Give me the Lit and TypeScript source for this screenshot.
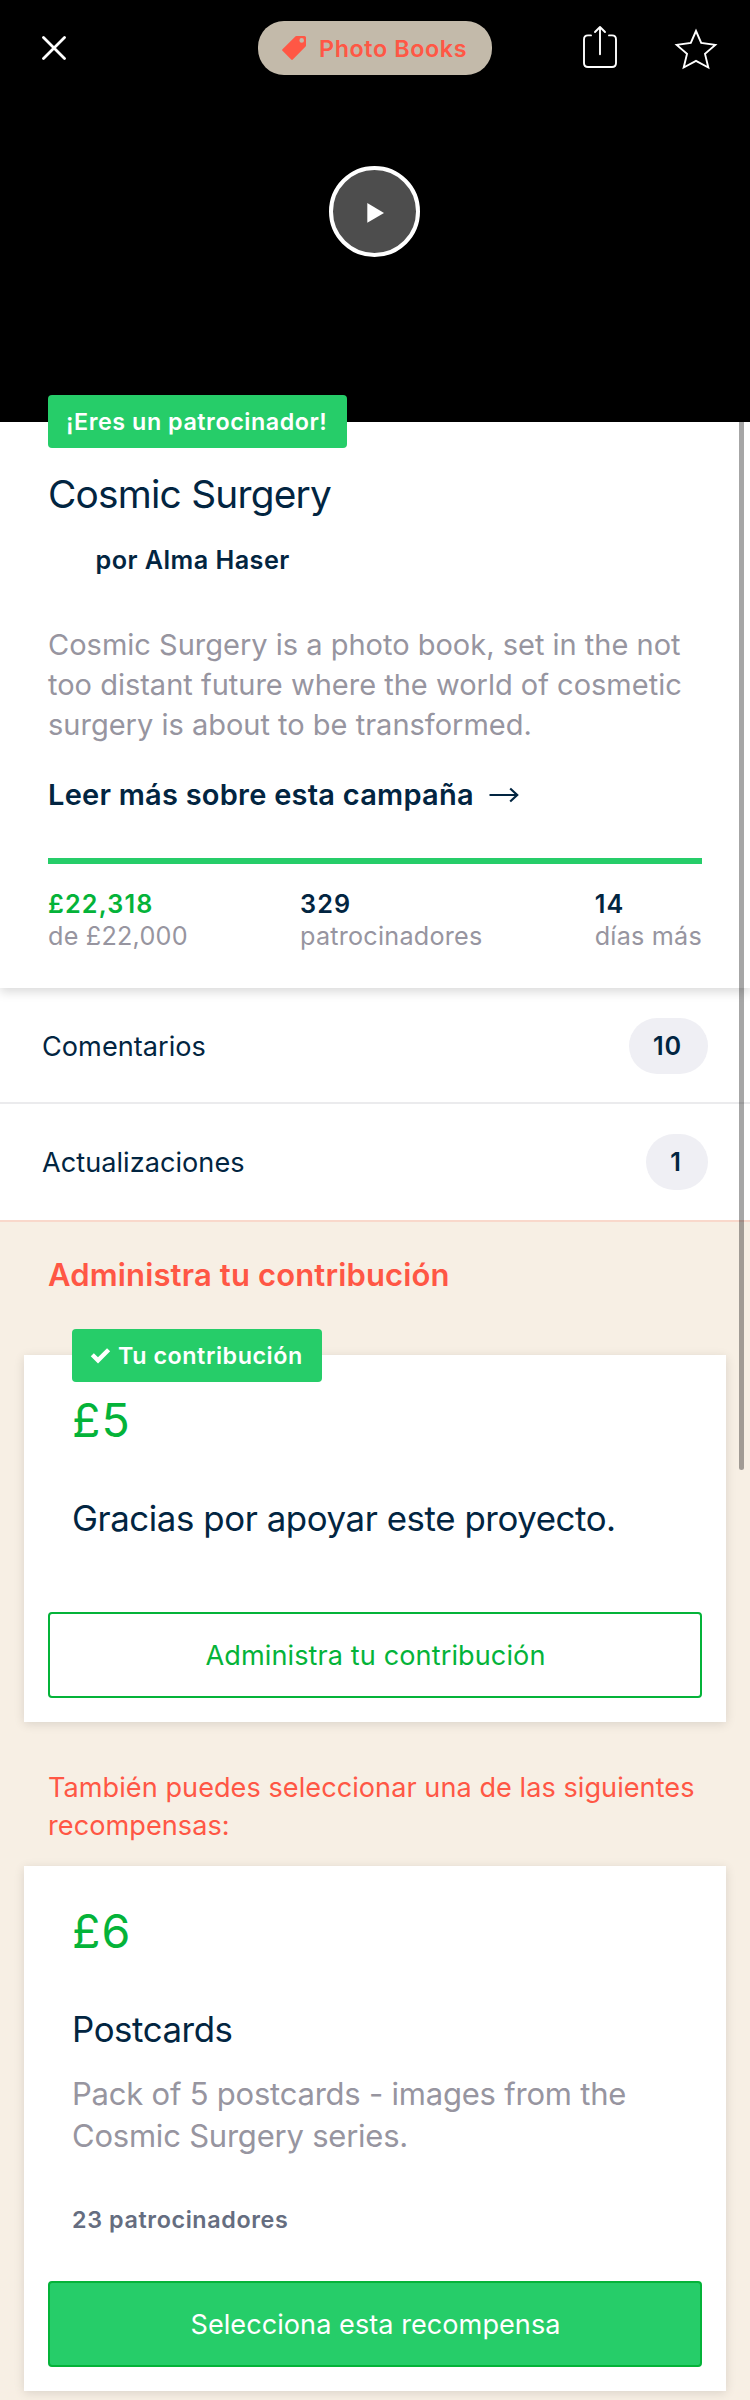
import { LitElement, html, css } from "lit";
import { customElement } from "lit/decorators.js";

@customElement("app-root")
export class AppRoot extends LitElement {
  static styles = css`
    :host {
      display: block;
      font-family: Inter, "Noto Sans", sans-serif;
      color: #022541;
      background: #f7efe4;
      min-height: 2400px;
      position: relative;
    }
    * { box-sizing: border-box; margin: 0; }
    svg { display: block; flex: none; }

    .hero { height: 422px; background: #000; }
    .topbar {
      display: grid;
      grid-template-columns: 216px 234px 1fr;
      padding: 21px 32px 0 42px;
      height: 75px;
      align-items: start;
    }
    .close { margin-top: 15px; }
    .category {
      display: flex;
      align-items: center;
      height: 54px;
      padding-left: 24px;
      gap: 13px;
      border-radius: 26px;
      background: #c3baaa;
      color: #ff5745;
      font-size: 23.3px;
      font-weight: 600;
      letter-spacing: 0.62px;
      white-space: nowrap;
    }
    .actions { display: flex; justify-content: flex-end; gap: 56px; padding-top: 4px; }
    .play {
      display: flex;
      width: 91px;
      height: 91px;
      margin: 91px 0 0 329px;
      border: 4px solid #fff;
      border-radius: 50%;
      background: #4d4d4d;
      padding: 33px 0 0 34px;
    }

    .summary {
      position: relative;
      height: 566px;
      padding: 0 48px;
      background: #fff;
      box-shadow: 0 4px 10px rgba(0, 0, 0, 0.15);
      z-index: 1;
    }
    .badge {
      display: flex;
      align-items: center;
      position: relative;
      height: 53px;
      border-radius: 4px;
      background: #26cd69;
      color: #fff;
      font-size: 23.3px;
      font-weight: 600;
      letter-spacing: 0.55px;
      white-space: nowrap;
      padding-left: 18px;
    }
    .badge-backer { width: 299px; top: -27px; margin-bottom: -27px; }
    .badge-pledge { width: 250px; top: -26px; margin: 0 0 -26px 24px; gap: 7px; }
    .title {
      font-size: 38.8px;
      font-weight: 400;
      letter-spacing: -0.77px;
      line-height: 48px;
      margin-top: 22px;
    }
    .author {
      font-size: 25.2px;
      font-weight: 600;
      letter-spacing: 0.46px;
      line-height: 32px;
      margin: 26px 0 0 47.5px;
    }
    .blurb {
      margin-top: 49px;
      font-size: 29px;
      line-height: 40px;
      letter-spacing: 0;
      color: #9795a0;
      white-space: nowrap;
    }
    .more {
      display: flex;
      align-items: center;
      gap: 15px;
      margin-top: 30px;
      font-size: 29px;
      font-weight: 600;
      line-height: 40px;
      letter-spacing: 0.24px;
      white-space: nowrap;
    }
    .progress { height: 6px; margin-top: 43px; background: #26cd69; }
    .stats {
      display: flex;
      justify-content: space-between;
      margin-top: 24px;
      font-size: 25.2px;
      line-height: 32px;
      white-space: nowrap;
    }
    .stat-value { font-weight: 600; letter-spacing: 1.15px; }
    .stat-value.green { color: #04b339; }
    .stat-label { color: #9795a0; letter-spacing: 0.22px; }

    .row {
      display: flex;
      justify-content: space-between;
      align-items: center;
      padding: 2px 42px 0;
      background: #fff;
      font-size: 27.1px;
      letter-spacing: 0.04px;
    }
    .row-comments { height: 116px; border-bottom: 2px solid #ebebed; }
    .row-updates { height: 118px; padding-top: 0; border-bottom: 2px solid #f9d8cb; }
    .count {
      display: flex;
      align-items: center;
      justify-content: center;
      height: 56px;
      padding: 0 25px 0 23px;
      border-radius: 28px;
      background: #efeff4;
      font-size: 25.2px;
      font-weight: 600;
      letter-spacing: 0.9px;
    }
    .count-10 { width: 79px; }
    .count-1 { width: 62px; }

    .manage { padding: 33px 24px 0; }
    .heading {
      font-size: 31px;
      font-weight: 600;
      letter-spacing: 0.15px;
      line-height: 40px;
      color: #ff5745;
      padding-left: 24px;
    }
    .card {
      background: #fff;
      box-shadow: 0 2px 10px rgba(0, 0, 0, 0.12);
      padding: 0 24px 24px;
    }
    .card-pledge { margin-top: 60px; }
    .card-reward { margin-top: 21px; padding-top: 37px; }
    .amount {
      padding-left: 24px;
      font-size: 46.5px;
      line-height: 56px;
      letter-spacing: 1.2px;
      color: #04b339;
    }
    .card-pledge .amount { margin-top: 10px; }
    .name {
      padding-left: 24px;
      margin-top: 48px;
      font-size: 34.8px;
      font-weight: 400;
      line-height: 44px;
      letter-spacing: -0.41px;
      white-space: nowrap;
    }
    .btn {
      display: flex;
      align-items: center;
      justify-content: center;
      height: 86px;
      padding-left: 1px;
      border: 2px solid #04b339;
      border-radius: 4px;
      font-size: 27.1px;
      letter-spacing: 0.1px;
    }
    .btn-outline { margin-top: 72px; color: #04b339; }
    .btn-solid { margin-top: 45px; background: #26cd69; color: #fff; letter-spacing: 0.04px; }
    .also {
      margin-top: 47px;
      padding-left: 24px;
      font-size: 27.1px;
      line-height: 38px;
      letter-spacing: 0.05px;
      color: #ff5745;
      white-space: nowrap;
    }
    .desc {
      padding-left: 24px;
      margin-top: 22px;
      font-size: 31px;
      line-height: 42px;
      letter-spacing: -0.22px;
      color: #9795a0;
      white-space: nowrap;
    }
    .backers {
      padding-left: 24px;
      margin-top: 47px;
      font-size: 23.3px;
      font-weight: 600;
      line-height: 32px;
      letter-spacing: 0.62px;
      color: #656d80;
    }
    .scrollbar {
      position: absolute;
      top: 422px;
      right: 6px;
      width: 5px;
      height: 1048px;
      border-radius: 0 0 3px 3px;
      background: rgba(0, 0, 0, 0.35);
      z-index: 2;
    }
  `;

  render() {
    return html`
      <header class="hero">
        <div class="topbar">
          <svg class="close" width="24" height="24" viewBox="0 0 24 24" fill="none" stroke="#fff" stroke-width="2.8" stroke-linecap="round">
            <path d="M1.5 1.5L22.5 22.5M22.5 1.5L1.5 22.5" />
          </svg>
          <div class="category">
            <svg width="24" height="24" viewBox="0 0 24 24" fill="#ff5745">
              <path fill-rule="evenodd" d="M13.6 0.3Q14 0 14.6 0H22.4Q24 0 24 1.6V9.4Q24 10 23.6 10.4L10.8 23.5Q10 24.3 9.2 23.5L0.5 14.8Q-0.3 14 0.5 13.2ZM19.7 2.1A2.3 2.3 0 1 0 19.7 6.7A2.3 2.3 0 1 0 19.7 2.1Z" />
            </svg>
            <span>Photo Books</span>
          </div>
          <div class="actions">
            <svg width="36" height="46" viewBox="582 25 36 46" fill="none" stroke="#fff" stroke-width="1.9" stroke-linecap="round" stroke-linejoin="round">
              <path d="M591 35.4H588Q584 35.4 584 39.4V63Q584 67 588 67H612Q616 67 616 63V39.4Q616 35.4 612 35.4H609" />
              <path d="M600 54.3V27M595 32L600 27L605 32" />
            </svg>
            <svg width="44" height="46" viewBox="674 25 44 46" fill="none" stroke="#fff" stroke-width="1.9">
              <path d="M696 31L701.2 43L715.3 44.9L705 53.9L708.3 67.5L696 60.8L683.7 67.5L687 53.9L676.7 44.9L690.8 43Z" />
            </svg>
          </div>
        </div>
        <div class="play">
          <svg width="18" height="20" viewBox="0 0 18 20" fill="#fff"><path d="M0.3 0L17 9.9L0.3 19.8Z" /></svg>
        </div>
      </header>

      <section class="summary">
        <div class="badge badge-backer">¡Eres un patrocinador!</div>
        <h1 class="title">Cosmic Surgery</h1>
        <p class="author">por Alma Haser</p>
        <p class="blurb">
          Cosmic Surgery is a photo book, set in the not<br />too distant future where the world of cosmetic<br />surgery is about to be transformed.
        </p>
        <div class="more">
          <span>Leer más sobre esta campaña</span>
          <svg width="30" height="16" viewBox="0 0 30 16" fill="none" stroke="#022541" stroke-width="2.2">
            <path d="M0.5 8H28M21.2 1.5L28.2 8L21.2 14.5" />
          </svg>
        </div>
        <div class="progress"></div>
        <div class="stats">
          <div>
            <div class="stat-value green">£22,318</div>
            <div class="stat-label">de £22,000</div>
          </div>
          <div>
            <div class="stat-value">329</div>
            <div class="stat-label">patrocinadores</div>
          </div>
          <div>
            <div class="stat-value">14</div>
            <div class="stat-label">días más</div>
          </div>
        </div>
      </section>

      <nav>
        <div class="row row-comments"><span>Comentarios</span><span class="count count-10">10</span></div>
        <div class="row row-updates"><span>Actualizaciones</span><span class="count count-1">1</span></div>
      </nav>

      <section class="manage">
        <h2 class="heading">Administra tu contribución</h2>
        <article class="card card-pledge">
          <div class="badge badge-pledge">
            <svg width="21" height="18" viewBox="0 0 21 18" fill="none" stroke="#fff" stroke-width="4.4">
              <path d="M2.3 7.8L8 13.4L18.6 2.8" />
            </svg>
            <span>Tu contribución</span>
          </div>
          <div class="amount">£5</div>
          <h3 class="name">Gracias por apoyar este proyecto.</h3>
          <div class="btn btn-outline">Administra tu contribución</div>
        </article>
        <p class="also">También puedes seleccionar una de las siguientes<br />recompensas:</p>
        <article class="card card-reward">
          <div class="amount">£6</div>
          <h3 class="name">Postcards</h3>
          <p class="desc">Pack of 5 postcards - images from the<br />Cosmic Surgery series.</p>
          <p class="backers">23 patrocinadores</p>
          <div class="btn btn-solid">Selecciona esta recompensa</div>
        </article>
      </section>
      <div class="scrollbar"></div>
    `;
  }
}
